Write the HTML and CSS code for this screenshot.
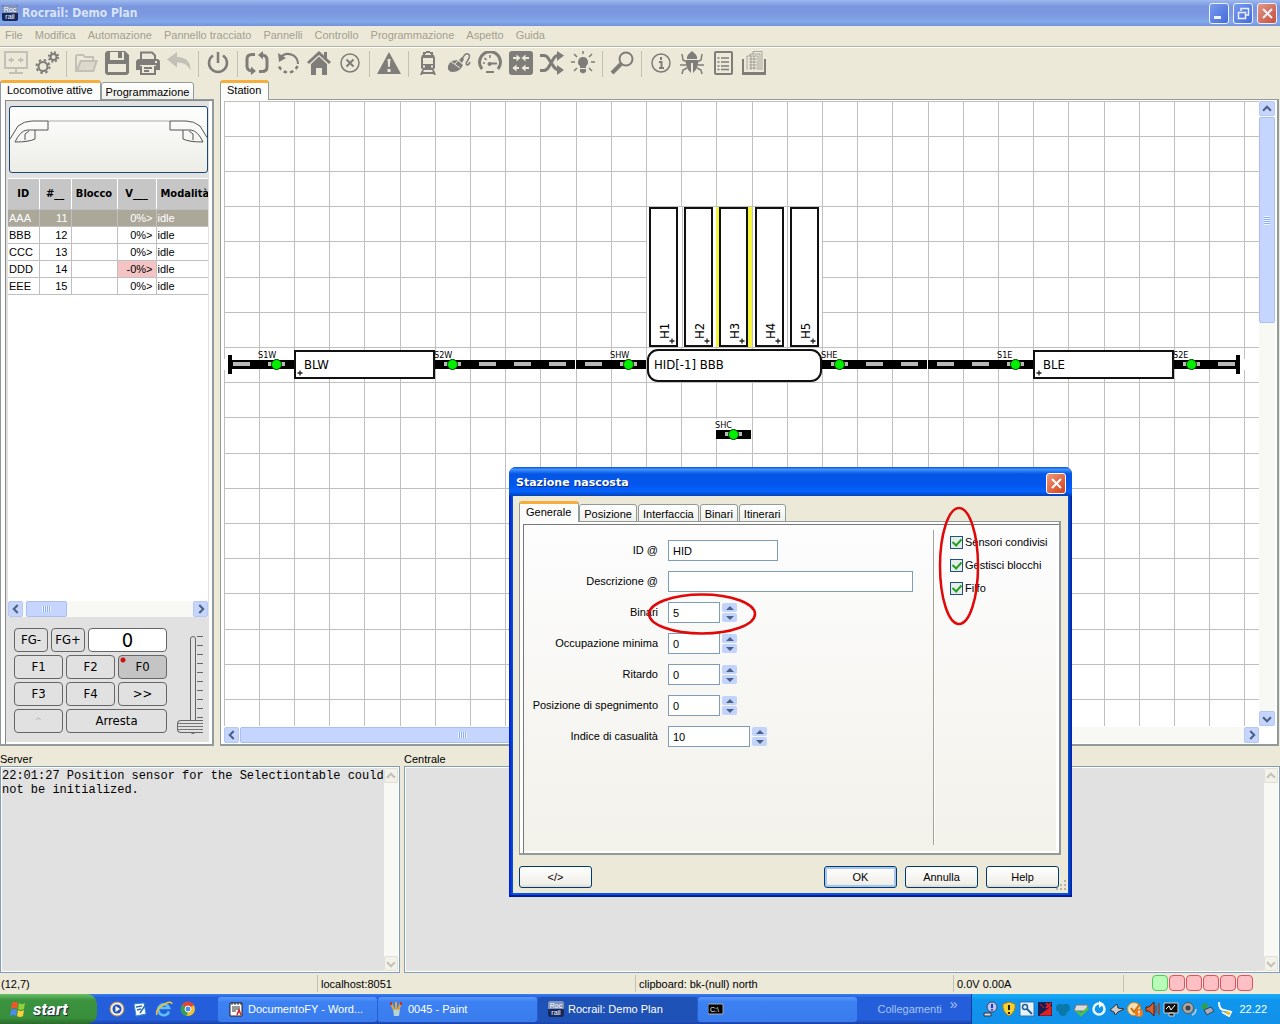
FILE: index.html
```
<!DOCTYPE html>
<html lang="it">
<head>
<meta charset="utf-8" />
<title>Rocrail: Demo Plan</title>
<link rel="stylesheet" href="styles.css">
</head>

<body>
<!-- simboli comuni -->
<svg class="defs" aria-hidden="true">
  <defs>
    <symbol id="left" viewBox="0 0 16 16"><path d="M10 3.500L5.500 8l4.500 4.500" fill="none" stroke="#4d6185" stroke-width="2.400"/></symbol>
    <symbol id="right" viewBox="0 0 16 16"><path d="M6 3.500L10.500 8 6 12.500" fill="none" stroke="#4d6185" stroke-width="2.400"/></symbol>
    <symbol id="up" viewBox="0 0 16 16"><path d="M3.500 10L8 5.500l4.500 4.500" fill="none" stroke="currentColor" stroke-width="2.400"/></symbol>
    <symbol id="down" viewBox="0 0 16 16"><path d="M3.500 6L8 10.500 12.500 6" fill="none" stroke="currentColor" stroke-width="2.400"/></symbol>
    <symbol id="logo" viewBox="0 0 16 16">
      <rect width="16" height="16" rx="2" fill="#17295c"/><path d="M0 2a2 2 0 0 1 2-2h12a2 2 0 0 1 2 2v6H0z" fill="#7f93bd"/>
      <text x="8" y="7" class="logo-t">Roc</text><text x="8" y="14" class="logo-t">rail</text>
    </symbol>
    <pattern id="grid" width="176" height="176" patternUnits="userSpaceOnUse">
      <path d="M.5 0v176M35.500 0v176M70.500 0v176M105.500 0v176M140.500 0v176M0 .5h176M0 35.500h176M0 70.500h176M0 105.500h176M0 140.500h176" stroke="#c0c0c0"/>
    </pattern>
    <g id="track"><rect y="-4" width="35" height="9" fill="#000"/><rect x="9" y="-2" width="17" height="4" fill="#b8b8b8"/></g>
    <g id="sensor"><rect y="-4" width="35" height="9" fill="#000"/><rect x="9" y="-2" width="17" height="4" fill="#b8b8b8"/><circle cx="17.500" cy=".5" r="5" fill="#00f000" stroke="#003c00"/></g>
    <path id="plus" d="M-2.500 0h5M0-2.500v5" stroke="#222" stroke-width="1.300"/>
  </defs>
</svg>

<div class="titlebar">
  <svg width="16" height="16"><use href="#logo"/></svg>
  <h1>Rocrail: Demo Plan</h1>
  <button class="win" aria-label="Riduci"><svg width="19" height="19"><path d="M4 13.500h7" stroke="#fff" stroke-width="3"/></svg></button>
  <button class="win" aria-label="Ripristina"><svg width="19" height="19"><path d="M7 7V4.500h7.500V11H12M4.500 8.500h7v6h-7z" fill="none" stroke="#fff" stroke-width="1.500"/></svg></button>
  <button class="win close" aria-label="Chiudi"><svg width="19" height="19"><path d="M5 5l9 9M14 5l-9 9" stroke="#fff" stroke-width="2"/></svg></button>
</div>

<div class="menubar">
  <a href="#">File</a><a href="#">Modifica</a><a href="#">Automazione</a><a href="#">Pannello tracciato</a><a href="#">Pannelli</a><a href="#">Controllo</a><a href="#">Programmazione</a><a href="#">Aspetto</a><a href="#">Guida</a>
</div>

<div class="toolbar">
  <button class="off" aria-label="Connetti"><svg viewBox="0 0 24 24"><path d="M1 1h22v16H1z" class="l"/><path d="M12 17v4M5 22h14" class="l"/><path d="M10 9H6M14 9h4" class="l"/><path d="M4 9l4-3v6zM20 9l-4-3v6z"/></svg></button>
  <button aria-label="Opzioni"><svg viewBox="0 0 24 24"><circle cx="8" cy="15.500" r="4.500" class="l"/><circle cx="8" cy="15.500" r="6.500" class="l" stroke-dasharray="2.500 2.600"/><circle cx="18.500" cy="6" r="3" class="l"/><circle cx="18.500" cy="6" r="4.700" class="l" stroke-dasharray="1.900 1.790"/></svg></button>
  <i></i>
  <button class="off" aria-label="Apri"><svg viewBox="0 0 24 24"><path d="M2 20V5l1-1h6l2 2h8v3" class="l"/><path d="M6 9h18l-4 12H1z"/><path d="M7.500 11h13.500l-2.500 8H4.500z" fill="#dddacd"/></svg></button>
  <button aria-label="Salva"><svg viewBox="0 0 24 24"><path fill-rule="evenodd" d="M2 0h18l4 4v18l-2 2H2l-2-2V2zM5 1v8h14V1h-2v6h-4V1zM3 13v8h18v-8z"/></svg></button>
  <button aria-label="Stampa"><svg viewBox="0 0 24 24"><path d="M5 8V1.500h11l3 3V8" class="l"/><path fill-rule="evenodd" d="M2 8h20l2 2v9h-4v-5H4v5H0v-9zM19 10h2v2h-2z"/><path d="M5 15v8h14v-8M8 17h8M8 20h5" class="l"/></svg></button>
  <button class="off" aria-label="Annulla modifica"><svg viewBox="0 0 24 24"><path d="M0 8.500L10 1v5c9 0 14 5 13.500 13.500C21 14 17 11.500 10 11.500v5z"/></svg></button>
  <i></i>
  <button aria-label="Alimentazione"><svg viewBox="0 0 24 24"><path d="M7 4.500a9 9 0 1 0 10 0M12 1v11" class="l m"/></svg></button>
  <i></i>
  <button aria-label="Auto"><svg viewBox="0 0 24 24"><path d="M10 3.500H7Q2 3.500 2 8v7q0 4 4 5M14 20.500h3q5 0 5-4.500V9q0-4-4-5" class="l b"/><path d="M6 15.500l5 4.500-5 4zM18 0l-5 4 5 4.500z"/></svg></button>
  <button aria-label="Reset"><svg viewBox="0 0 24 24"><path d="M4 7a10 10 0 0 1 18 6" class="l"/><path d="M21.500 15A10 10 0 0 1 2.500 14" class="l m" stroke-dasharray="3.500 3"/><path d="M2 2l1 9 7-4z"/></svg></button>
  <button aria-label="Home"><svg viewBox="0 0 24 24"><path d="M1 12L12 2l11 10M18.500 1v6" class="l b"/><path d="M4 13l8-7.500L20 13v11h-5v-7H9v7H4z"/></svg></button>
  <button aria-label="Stop"><svg viewBox="0 0 24 24"><circle cx="12" cy="12" r="9" class="l t"/><path d="M8.500 8.500l7 7M15.500 8.500l-7 7" class="l"/></svg></button>
  <i></i>
  <button aria-label="Emergenza"><svg viewBox="0 0 24 24"><path fill-rule="evenodd" d="M12 1l12 22H0zM10.500 8l.7 8h1.600l.7-8zM10.500 18v3h3v-3z"/></svg></button>
  <i></i>
  <button aria-label="Locomotive"><svg viewBox="0 0 24 24"><path d="M8 4V2h2M16 4V2h-2M10 1h4" class="l"/><path fill-rule="evenodd" d="M6 4h12l1 3v10l-2 2H7l-2-2V7zM7 7v6h10V7zM7 14.500v2h2v-2zM15 14.500v2h2v-2z"/><path d="M7 19l-2 5M17 19l2 5M6 22h12" class="l"/></svg></button>
  <button aria-label="Mouse"><svg viewBox="0 0 24 24"><path d="M1 15q-1 6 5 6 7 0 10-7l-6-5q-7 0-9 6z"/><path d="M12 9l3 3 2-4-2-2z"/><path d="M3 10l10 7M8 13l5-6" stroke="#ece9d8"/><path d="M15 8q3-6 6-5 3 1 0 6-3 4-1 5 2 0 3-3" class="l t"/></svg></button>
  <button aria-label="Velocità"><svg viewBox="0 0 24 24"><path d="M4 18A10.500 10.500 0 1 1 20 18" class="l b"/><path d="M11 12.500h8M8 21h8" class="l"/><circle cx="11.500" cy="13" r="2"/><path d="M12 4v3M5 12h2M6.500 7l2 2" class="l t"/></svg></button>
  <button aria-label="Scambi"><svg viewBox="0 0 24 24"><rect width="24" height="24" rx="3"/><path d="M4 7h6M14 7h6M4 17h6M14 17h6" stroke="#ece9d8" stroke-width="2"/><path d="M7.500 3.500l4 3.500-4 3.500zM16.500 3.500l-4 3.500 4 3.500zM7.500 13.500l-4 3.500 4 3.500zM16.500 13.500l-4 3.500 4 3.500z" fill="#ece9d8"/></svg></button>
  <button aria-label="Itinerari"><svg viewBox="0 0 24 24"><path d="M0 4.500h4q3 0 5 4l4 6q2 4 5 4h1M0 19.500h4q3 0 5-4l4-7q2-4 5-4h1" class="l b"/><path d="M17 0l7 4.500L17 10zM17 14l7 5-7 5z"/></svg></button>
  <button aria-label="Luci"><svg viewBox="0 0 24 24"><path d="M12 6a5 5 0 0 0-3 9v2h6v-2a5 5 0 0 0-3-9zM9 18h6v3l-3 1.500L9 21z"/><path d="M12 0v3M0 11h4M20 11h4M3 3l3 3M21 3l-3 3M3 20l3-3M21 20l-3-3" class="l t"/></svg></button>
  <i></i>
  <button aria-label="Cerca"><svg viewBox="0 0 24 24"><circle cx="16" cy="8" r="6.500" class="l"/><path d="M11 13l-9 9" class="l w"/></svg></button>
  <i></i>
  <button aria-label="Info"><svg viewBox="0 0 24 24"><circle cx="12" cy="12" r="9" class="l t"/><path d="M12 6v3M10 11h2.500v6M10 17h5" class="l"/></svg></button>
  <button aria-label="Debug"><svg viewBox="0 0 24 24"><path d="M7 6q0-2 5-6 5 4 5 6v2H7zM6 9h12q1 8-5 13V12h-2v10Q5 17 6 9z"/><path d="M7 11L3 9 2 3M17 11l4-2 1-6M6 14H0M18 14h6M7 17l-4 2-1 4M17 17l4 2 1 4" class="l t"/></svg></button>
  <button aria-label="Elenco"><svg viewBox="0 0 24 24"><rect x="4" y="1" width="17" height="22" rx="1" class="l"/><path d="M10 7h8M10 11h8M10 15h8M10 18.500h8M6.500 7h2M6.500 11h2M6.500 15h2M6.500 18.500h2" class="l t"/></svg></button>
  <button aria-label="Documenti"><svg viewBox="0 0 24 24"><path d="M1 8v14h22V8" class="l"/><path d="M0 21h24v3H0z"/><path d="M5 19V5h11v14M8 5V3h10v16M11 3V.5h9V19M7 8h8M7 11h8M7 14h8M7 17h8M9 5v14M12 5v14" class="l h"/></svg></button>
</div>

<div class="main">
  <div class="pane left">
    <div class="tabs"><button class="tab on">Locomotive attive</button><button class="tab">Programmazione</button></div>
    <div class="page loco">
      <button class="picture" aria-label="Locomotiva">
        <svg width="198" height="64" fill="none" stroke="#555"><path d="M38 13h122" stroke="#aaa"/><path d="M0 31L8 18Q14 13 22 13h16v9H17Q10 23 5 34q14 0 20-3v-9M15 32v-6l4-3M198 31l-8-13q-6-5-14-5h-16v9h21q7 1 12 12-14 0-20-3v-9M183 32v-6l-4-3"/></svg>
      </button>
      <div class="list">
        <table>
          <thead><tr><th>ID</th><th>#__</th><th>Blocco</th><th>V___</th><th>Modalità</th></tr></thead>
          <tbody>
            <tr class="sel"><td>AAA</td><td>11</td><td></td><td>0%&gt;</td><td>idle</td></tr>
            <tr><td>BBB</td><td>12</td><td></td><td>0%&gt;</td><td>idle</td></tr>
            <tr><td>CCC</td><td>13</td><td></td><td>0%&gt;</td><td>idle</td></tr>
            <tr><td>DDD</td><td>14</td><td></td><td class="rev">-0%&gt;</td><td>idle</td></tr>
            <tr><td>EEE</td><td>15</td><td></td><td>0%&gt;</td><td>idle</td></tr>
          </tbody>
        </table>
      </div>
      <div class="hscroll">
        <button class="arrow" aria-label="Sinistra"><svg width="14" height="14"><use href="#left"/></svg></button>
        <span class="thumb short"></span>
        <button class="arrow end" aria-label="Destra"><svg width="14" height="14"><use href="#right"/></svg></button>
      </div>
      <div class="throttle">
        <div class="keys">
          <div class="row"><button class="fg">FG-</button><button class="fg">FG+</button><output>0</output></div>
          <div class="row"><button>F1</button><button>F2</button><button class="f0">F0</button></div>
          <div class="row"><button>F3</button><button>F4</button><button>&gt;&gt;</button></div>
          <div class="row"><button disabled>^</button><button class="wide">Arresta</button></div>
        </div>
        <input class="speed" type="range" min="0" max="100" value="0" aria-label="Velocità" />
      </div>
    </div>
  </div>

  <div class="pane right">
    <div class="tabs"><button class="tab on">Station</button></div>
    <div class="page plan">
      <svg class="canvas">
        <rect width="100%" height="100%" fill="url(#grid)"/>
        <!-- binari -->
        <g transform="translate(0 263)">
          <use href="#track"/><use href="#track" x="246"/><use href="#track" x="281"/><use href="#track" x="316"/><use href="#track" x="352"/>
          <use href="#track" x="633"/><use href="#track" x="668"/><use href="#track" x="704"/><use href="#track" x="739"/><use href="#track" x="985"/>
          <use href="#sensor" x="35"/><use href="#sensor" x="211"/><use href="#sensor" x="387"/><use href="#sensor" x="598"/><use href="#sensor" x="774"/><use href="#sensor" x="950"/>
          <path d="M0-5h5V6H0zM1015-5h6V6h-6z" fill="#fff"/>
          <path d="M4-9h4V10H4zM1012-9h4V10h-4z"/>
        </g>
        <g class="small">
          <text x="34" y="257">S1W</text><text x="210" y="257">S2W</text><text x="386" y="257">SHW</text>
          <text x="597" y="257">SHE</text><text x="773" y="257">S1E</text><text x="949" y="257">S2E</text>
        </g>
        <!-- blocchi -->
        <g class="block">
          <rect x="71" y="250" width="139" height="27"/><rect x="810" y="250" width="139" height="27"/>
        </g>
        <use href="#plus" x="76" y="272"/><use href="#plus" x="815" y="272"/>
        <text x="80" y="268">BLW</text><text x="819" y="268">BLE</text>
        <!-- stazione nascosta -->
        <path d="M423 106h175v140H423z" fill="#fff"/>
        <path d="M458.500 106v140M493.500 106v140M528.500 106v140M563.500 106v140M598.500 106v140" stroke="#c0c0c0"/>
        <path d="M492 106h36v140h-36z" fill="#f5f53c"/>
        <g class="block">
          <rect x="426" y="107" width="27" height="138"/><rect x="461" y="107" width="27" height="138"/><rect x="496" y="107" width="27" height="138"/><rect x="532" y="107" width="27" height="138"/><rect x="567" y="107" width="27" height="138"/>
          <rect x="424" y="249" width="173" height="31" rx="10"/>
        </g>
        <use href="#plus" x="448" y="240"/><use href="#plus" x="483" y="240"/><use href="#plus" x="518" y="240"/><use href="#plus" x="554" y="240"/><use href="#plus" x="589" y="240"/>
        <text transform="translate(445 238) rotate(-90)">H1</text><text transform="translate(480 238) rotate(-90)">H2</text><text transform="translate(515 238) rotate(-90)">H3</text><text transform="translate(551 238) rotate(-90)">H4</text><text transform="translate(586 238) rotate(-90)">H5</text>
        <text x="430" y="268">HID[-1] BBB</text>
        <path d="M492 318h34v11h-34z" fill="#fff"/>
        <use href="#sensor" x="492" y="333"/>
        <text class="small" x="491" y="327">SHC</text>
      </svg>
      <div class="vscroll">
        <button class="arrow" aria-label="Su"><svg width="14" height="14"><use href="#up"/></svg></button>
        <span class="thumb tall"></span>
        <button class="arrow end" aria-label="Giù"><svg width="14" height="14"><use href="#down"/></svg></button>
      </div>
      <div class="hscroll">
        <button class="arrow" aria-label="Sinistra"><svg width="14" height="14"><use href="#left"/></svg></button>
        <span class="thumb long"></span>
        <button class="arrow end" aria-label="Destra"><svg width="14" height="14"><use href="#right"/></svg></button>
      </div>
    </div>
  </div>
</div>

<div class="logs">
  <div class="log">
    <label for="server">Server</label>
    <div class="logbox">
      <textarea id="server" readonly>22:01:27 Position sensor for the Selectiontable could
not be initialized.</textarea>
      <div class="vscroll dim"><span class="arrow"><svg width="14" height="14"><use href="#up"/></svg></span><span class="arrow end"><svg width="14" height="14"><use href="#down"/></svg></span></div>
    </div>
  </div>
  <div class="log">
    <label for="centrale">Centrale</label>
    <div class="logbox">
      <textarea id="centrale" readonly></textarea>
      <div class="vscroll dim"><span class="arrow"><svg width="14" height="14"><use href="#up"/></svg></span><span class="arrow end"><svg width="14" height="14"><use href="#down"/></svg></span></div>
    </div>
  </div>
</div>

<div class="status">
  <span>(12,7)</span><span>localhost:8051</span><span>clipboard: bk-(null) north</span><span>0.0V 0.00A</span>
  <span class="leds"><b class="ok"></b><b></b><b></b><b></b><b></b><b></b></span>
</div>

<div class="taskbar">
  <button class="start">
    <svg width="18" height="18"><path d="M3 3q3-2 6 0L8 9q-3-2-6 0z" fill="#f0562a"/><path d="M10 3q3 2 6 0l-1 6q-3 2-6 0z" fill="#8cd03a"/><path d="M2 10q3-2 6 0l-1 6q-3-2-6 0z" fill="#4a8cf0"/><path d="M9 10q3 2 6 0l-1 6q-3 2-6 0z" fill="#fbd038"/></svg>
    start
  </button>
  <div class="quick">
    <a href="#" aria-label="Media"><svg width="16" height="16"><circle cx="8" cy="8" r="7" fill="#e8eef8" stroke="#d08a20"/><circle cx="8" cy="8" r="4.500" fill="#2454b4"/><path d="M6.500 5l4.500 3-4.500 3z" fill="#fff"/></svg></a>
    <a href="#" aria-label="Desktop"><svg width="16" height="16"><path d="M2 3l10-1 2 11-10 2z" fill="#fff" stroke="#3c8cd0"/><path d="M4 6l6-1M5 9l4-1M8 12l6-9" stroke="#2a6cb8" stroke-width="1.500"/></svg></a>
    <a href="#" aria-label="Explorer"><svg width="18" height="16"><path d="M14 10.500A5.500 5.500 0 1 1 14 7H5" fill="none" stroke="#5cc0f8" stroke-width="2.600"/><path d="M2 14Q0 9 8 4t9-1" fill="none" stroke="#f4c430" stroke-width="1.500"/></svg></a>
    <a href="#" aria-label="Chrome"><svg width="16" height="16"><circle cx="8" cy="8" r="7" fill="#f0c030"/><path d="M8 8L2 4a7 7 0 0 1 12 0z" fill="#e04434"/><path d="M8 8l-6-4a7 7 0 0 0 5 11z" fill="#34a050"/><circle cx="8" cy="8" r="3" fill="#4a8cf0" stroke="#fff"/></svg></a>
  </div>
  <div class="tasks">
    <button><svg width="16" height="16"><path d="M2 2h12v13H2z" fill="#fff" stroke="#222"/><path d="M4 1v3M7 1v3M10 1v3M13 1v3M4 6h8M4 8h8M4 10h4" stroke="#333"/><path d="M9 14l2-5 2 5" fill="none" stroke="#d02020" stroke-width="1.500"/></svg>DocumentoFY - Word...</button>
    <button><svg width="16" height="16"><path d="M5 8h7l-1 7H6z" fill="#b8d4d8"/><path d="M6 9L3 2M8 9V1M10 9l3-7" stroke="#e0a840" stroke-width="2"/><path d="M3 4V1M13 4V1" stroke="#d03020" stroke-width="2"/></svg>0045 - Paint</button>
    <button class="on"><svg width="16" height="16"><use href="#logo"/></svg>Rocrail: Demo Plan</button>
    <button aria-label="Prompt"><svg width="16" height="16"><path d="M0 3h15v10H0z" fill="#000" stroke="#aaa"/><text x="2" y="11" class="cmd">C:\</text></svg></button>
  </div>
  <div class="links">Collegamenti <sup>»</sup></div>
  <div class="tray">
    <svg width="16" height="16"><circle cx="9" cy="6" r="5" fill="#b8c8ff" stroke="#445"/><path d="M9 3v4M9 8v1.500" stroke="#2038c0" stroke-width="2"/><path d="M1 12h7v3H1z" fill="#ddd" stroke="#334"/></svg>
    <svg width="16" height="16"><path d="M8 1l6 2q1 8-6 12Q1 11 2 3z" fill="#f8d030" stroke="#a08020"/><path d="M8 4v5M8 11v2" stroke="#222" stroke-width="2"/></svg>
    <svg width="16" height="16"><path d="M1 1h14v14H1z" fill="#e8f4fc" stroke="#3070b0"/><circle cx="6" cy="6" r="2.500" fill="none" stroke="#206090" stroke-width="1.500"/><path d="M8 8l5 5" stroke="#206090" stroke-width="2"/></svg>
    <svg width="16" height="16"><path d="M1 1h14v14H1z" fill="#181c50"/><path d="M3 3l4 4M3 14L14 6v8z" fill="#e02020" stroke="#e02020"/><path d="M9 2l5 5M14 2L9 7" stroke="#e02020" stroke-width="2"/></svg>
    <svg width="16" height="16"><circle cx="5" cy="7" r="4" fill="#0a78a8"/><circle cx="11" cy="7" r="4" fill="#0a78a8"/><circle cx="8" cy="11" r="4" fill="#0a78a8"/></svg>
    <svg width="16" height="16"><path d="M3 4h12l-2 6H1z" fill="#ddd" stroke="#777"/><path d="M4 10l4 4 7-7" fill="none" stroke="#50c040" stroke-width="2.500"/></svg>
    <svg width="16" height="16"><circle cx="8" cy="8" r="5.500" fill="none" stroke="#e8f6ff" stroke-width="2.500"/><path d="M8 0l5 3-5 4z" fill="#fff"/></svg>
    <svg width="16" height="16"><path d="M1 9l7-6 1 4 6 1-6 3-3 3-1-3z" fill="#ccc" stroke="#333"/></svg>
    <svg width="16" height="16"><circle cx="7" cy="8" r="6.500" fill="#f4e0b0" stroke="#d08a20"/><path d="M4 7l3 4 6-8" fill="none" stroke="#c87010" stroke-width="2"/><circle cx="12" cy="12" r="4" fill="#f07818"/><path d="M12 9.500v3M12 13.500v1" stroke="#fff" stroke-width="1.500"/></svg>
    <svg width="16" height="16"><path d="M1 6h3l5-5v14l-5-5H1z" fill="#d86030" stroke="#501808"/><path d="M11 4v8M14 2v12" stroke="#a04020" stroke-width="1.500"/></svg>
    <svg width="16" height="16"><path d="M1 2h14v10H1zM6 12h5v3H6z" fill="#111" stroke="#ccc"/><path d="M3 8l3-3 2 4 4-5" fill="none" stroke="#fff"/></svg>
    <svg width="16" height="16"><circle cx="7" cy="7" r="5.500" fill="#aaa" stroke="#555"/><circle cx="7" cy="7" r="2.500" fill="#444"/><path d="M11 14q4-2 4-6" fill="none" stroke="#ccc" stroke-width="1.500"/></svg>
    <svg width="16" height="16"><path d="M2 5l5-4 2 5-5 3z" fill="#30a040"/><path d="M5 9l7-3 3 4-7 4z" fill="#aab" stroke="#345"/></svg>
    <svg width="16" height="16"><path d="M2 1q0 8 5 8l7 2-2 4-7-4" fill="none" stroke="#fff" stroke-width="2"/><path d="M9 11l4 2" stroke="#e8c020" stroke-width="3"/></svg>
    <time>22.22</time>
  </div>
</div>

<!-- finestra proprietà -->
<div class="dialog" role="dialog" aria-labelledby="dlg">
  <div class="dlg-title"><h2 id="dlg">Stazione nascosta</h2><button class="win close" aria-label="Chiudi"><svg width="19" height="19"><path d="M5 5l9 9M14 5l-9 9" stroke="#fff" stroke-width="2"/></svg></button></div>
  <div class="dlg-body">
    <div class="tabs"><button class="tab on">Generale</button><button class="tab">Posizione</button><button class="tab">Interfaccia</button><button class="tab">Binari</button><button class="tab">Itinerari</button></div>
    <div class="page form">
      <div class="fields">
        <label for="id">ID @</label><div><input type="text" id="id" class="w-id" value="HID" /></div>
        <label for="desc">Descrizione @</label><div><input type="text" id="desc" class="w-desc" value="" /></div>
        <label for="binari">Binari</label><div><input type="text" id="binari" value="5" /><span class="spin"><button aria-label="Aumenta"></button><button class="dn" aria-label="Diminuisci"></button></span></div>
        <label for="occ">Occupazione minima</label><div><input type="text" id="occ" value="0" /><span class="spin"><button aria-label="Aumenta"></button><button class="dn" aria-label="Diminuisci"></button></span></div>
        <label for="rit">Ritardo</label><div><input type="text" id="rit" value="0" /><span class="spin"><button aria-label="Aumenta"></button><button class="dn" aria-label="Diminuisci"></button></span></div>
        <label for="pos">Posizione di spegnimento</label><div><input type="text" id="pos" value="0" /><span class="spin"><button aria-label="Aumenta"></button><button class="dn" aria-label="Diminuisci"></button></span></div>
        <label for="cas">Indice di casualità</label><div><input type="text" id="cas" class="w-cas" value="10" /><span class="spin"><button aria-label="Aumenta"></button><button class="dn" aria-label="Diminuisci"></button></span></div>
      </div>
      <div class="checks">
        <label><input type="checkbox" checked />Sensori condivisi</label>
        <label><input type="checkbox" checked />Gestisci blocchi</label>
        <label><input type="checkbox" checked />Filfo</label>
      </div>
    </div>
    <div class="buttons"><button>&lt;/&gt;</button><button class="ok">OK</button><button>Annulla</button><button>Help</button></div>
  </div>
  <svg class="grip" width="12" height="12"><path d="M9 1h2M5 5h2M9 5h2M1 9h2M5 9h2M9 9h2" stroke="#b8b4a0" stroke-width="2"/></svg>
  <!-- segni rossi -->
  <svg class="marks" fill="none" stroke="#e00808" stroke-width="2.500"><ellipse cx="193" cy="147" rx="53" ry="19.500"/><ellipse cx="450" cy="99" rx="19" ry="58"/></svg>
</div>
</body>
</html>
```
FILE: styles.css
```
/* base */
*{box-sizing:border-box;}
body,h1,h2{margin:0; padding:0;}
body{display:flex; flex-direction:column; height:100vh; position:relative; overflow:hidden; background:#ece9d8; color:#000; font-family:Tahoma,"Liberation Sans",sans-serif; font-size:11px; line-height:14px;}
button,input,textarea{font:inherit; color:inherit; margin:0; padding:0; border:0; border-radius:0; background:none;}
svg{display:block; flex:none;}
a{color:inherit; text-decoration:none;}
.defs{position:absolute; width:0; height:0;}
.logo-t{font-size:7px; fill:#fff; text-anchor:middle;}

/* barra del titolo */
.titlebar{display:flex; align-items:center; gap:4px; height:26px; padding:0 3px 0 2px; background:linear-gradient(#9db9ee 0,#7a96df 25%,#7c98e0 55%,#82a9e9 85%,#7590d8);}
.titlebar h1{flex:1; font:bold 12px/16px "DejaVu Sans Condensed","DejaVu Sans",sans-serif; color:#d8e4f8;}
.win{display:flex; align-items:center; justify-content:center; width:20px; height:21px; border:1px solid #fff; border-radius:3px; background:linear-gradient(135deg,#7a9cf0,#3a62d8);}
.titlebar .win{opacity:.85;}
.titlebar .close,.dialog .close{background:linear-gradient(135deg,#f0977a,#d4401c);}

/* menu */
.menubar{display:flex; gap:12px; height:21px; padding:2px 5px; color:#a3a08f; border-bottom:1px solid #b5b2a2;}

/* toolbar */
.toolbar{display:flex; align-items:center; height:33px; border-top:1px solid #fff;}
.toolbar button{display:flex; justify-content:center; width:31px; height:26px; color:#7e7d79;}
.toolbar .off{color:#c3c1b7;}
.toolbar i{width:8px; height:26px; background:linear-gradient(90deg,transparent 4px,#c5c2b2 4px 5px,transparent 5px);}
.toolbar svg{width:24px; height:24px; fill:currentColor;}
.toolbar .l{fill:none; stroke:currentColor; stroke-width:2;}
.toolbar .m{stroke-width:2.500;}
.toolbar .b{stroke-width:3;}
.toolbar .w{stroke-width:4;}
.toolbar .t{stroke-width:1.500;}
.toolbar .h{stroke-width:.6;}

/* schede */
.tabs{display:flex; align-items:flex-end; height:20px; position:relative; z-index:1; margin-bottom:-1px;}
.tab{height:18px; padding:1px 4px 0; border:1px solid #919b9c; border-radius:3px 3px 0 0; background:linear-gradient(#fff,#f0f0ea);}
.tab.on{height:20px; padding:0 7px 3px 6px; border-top:3px solid #f5ae3c; border-bottom:0; background:#fcfcfb;}
.page{flex:1; min-height:0; border:1px solid #919b9c; border-right-width:2px; border-bottom-width:2px; background:#fff;}

.main{flex:1; min-height:0; display:grid; grid-template-columns:214px 1fr; gap:6px; padding-right:1px;}
.pane{display:flex; flex-direction:column; min-width:0; min-height:0;}

/* locomotive */
.loco{display:flex; flex-direction:column; padding:3px 4px 2px 7px; background:#e1e1e1; box-shadow:inset 4px 0 #fff,inset 5px 1px #888,inset -3px 0 #fff,inset 0 -2px #fff;}
.picture{height:67px; margin:3px 0 5px 1px; width:199px; border:1px solid #1c4872; border-radius:3px; background:linear-gradient(#fefefe,#ededE8);}
.list{flex:1; min-height:0; overflow:hidden; background:#fff;}
table{width:216px; table-layout:fixed; border-collapse:collapse;}
th{height:31px; padding:0; background:#c6c6c6; border-right:1px solid #fff; border-bottom:1px solid #c0c0c0; border-top:1px solid #fff; font-family:"DejaVu Sans Condensed","DejaVu Sans",sans-serif; font-weight:bold;}
th:nth-child(1){width:31px;} th:nth-child(2){width:32px;} th:nth-child(3){width:46px;} th:nth-child(4){width:39px;}
th:nth-child(5){text-align:left; padding-left:4px;}
td{height:17px; padding:0 1px; border-right:1px solid #c0c0c0; border-bottom:1px solid #c0c0c0;}
td:nth-child(2),td:nth-child(4){text-align:right; padding-right:3px;}
.sel td{background:#aca899; color:#fff;}
.rev{background:#f4c4c4;}

/* barre di scorrimento */
.hscroll,.vscroll{display:flex; gap:1px; background:#f8f8f4;}
.hscroll{height:16px;}
.vscroll{flex-direction:column; width:16px;}
.arrow{display:flex; align-items:center; justify-content:center; width:15px; height:16px; flex:none; border:1px solid #b4c8f0; border-radius:2px; background:#c6d5fd; color:#4d6185;}
.vscroll .arrow{width:100%; height:15px;}
.hscroll .end{margin-left:auto;}
.vscroll .end{margin-top:auto;}
.thumb{display:flex; align-items:center; justify-content:center; border:1px solid #a8bff0; border-radius:2px; background:#c6d5fd;}
.thumb:before{content:""; width:9px; height:6px; background:repeating-linear-gradient(90deg,#eef4fe 0 1px,#8cb0f8 1px 2px);}
.tall:before{width:6px; height:9px; background:repeating-linear-gradient(#eef4fe 0 1px,#8cb0f8 1px 2px);}
.short{width:41px; margin-left:2px;}
.long{width:43%;}
.tall{height:206px;}
.dim{width:14px;}
.dim .arrow{background:#f2f1ea; border-color:#e2e0d4; color:#c4c2b6;}

/* regolatore */
.throttle{display:flex; justify-content:space-between; padding:11px 5px 8px 6px; font-family:"DejaVu Sans Condensed","DejaVu Sans",sans-serif;}
.keys{display:flex; flex-direction:column; gap:3px; width:153px;}
.row{display:flex; gap:3px;}
.row button,.row output{flex:1; height:24px; border:1px solid #666; border-radius:4px; font-size:13px; line-height:22px; text-align:center;}
.row .fg{flex:none; width:34px;}
.row output{background:#fff; font-size:20px;}
.row .wide{flex:none; width:101px;}
.row button:disabled{color:#b4b4b4; font-size:9px;}
.row .f0{background:radial-gradient(circle at 4px 4px,#d01010 2px,#c4c4c4 3px);}
.speed{-webkit-appearance:none; appearance:none; writing-mode:vertical-lr; direction:rtl; width:26px; height:98px; margin-top:8px; background:repeating-linear-gradient(#666 0 1px,transparent 1px 9px) right top/6px 86px no-repeat;}
.speed::-webkit-slider-runnable-track{width:6px; height:98px; margin-left:6px; border:1px solid #666; border-radius:3px; background:#e1e1e1;}
.speed::-webkit-slider-thumb{-webkit-appearance:none; width:26px; height:13px; margin-left:-14px; border:1px solid #666; border-right:0; border-radius:4px 0 0 4px; background:repeating-linear-gradient(#e1e1e1 0 2px,#777 2px 3px);}

/* piano */
.plan{display:grid; grid-template:1fr 17px / 1fr 16px; padding:1px 2px 1px 3px;}
.canvas{width:100%; height:100%; font:13px "DejaVu Sans Condensed","DejaVu Sans",sans-serif;}
.plan .hscroll{margin-top:1px;}
.small{font-size:9px;}
.block rect{fill:#fff; stroke:#111; stroke-width:2;}

/* log */
.logs{display:grid; grid-template-columns:400px 1fr; gap:4px; height:227px; padding-top:6px;}
.log{display:flex; flex-direction:column; min-width:0;}
.log label{height:14px; line-height:15px;}
.logbox{flex:1; display:flex; border:1px solid #7f9db9; background:#fff; padding:1px; min-height:0;}
.logbox textarea{flex:1; min-width:0; resize:none; outline:0; overflow:hidden; white-space:pre; background:#e1e1e1; font:12px/14px "Liberation Mono",monospace; padding:1px 0 0;}

/* stato */
.status{display:grid; grid-template-columns:317px 318px 318px 170px 1fr; align-items:center; height:21px;}
.status span{height:17px; line-height:19px; padding-left:3px; border-left:1px solid #c5c2b2;}
.status span:first-child{border:0; padding-left:1px;}
.status .leds{display:flex; gap:1px; padding-left:28px;}
.leds b{width:16px; height:16px; border:1px solid #e05060; border-radius:4px; background:#fcc0c4;}
.leds .ok{border-color:#50c860; background:#b8fcb8;}

/* barra delle applicazioni */
.taskbar{display:flex; align-items:stretch; height:30px; color:#fff; background:linear-gradient(#3a80f0 0,#245edb 12%,#245edb 85%,#1941a5);}
.start{display:flex; align-items:center; gap:6px; width:97px; padding-left:9px; border-radius:0 10px 10px 0; background:linear-gradient(#6cc068 0,#3c9440 20%,#388e3a 80%,#2a6a2c); font:italic bold 17px/20px Roboto,sans-serif; text-shadow:1px 1px 1px #224; color:#fff;}
.quick{display:flex; align-items:center; gap:7px; width:121px; padding-left:12px;}
.tasks{display:flex; gap:1px; align-items:center;}
.tasks button{display:flex; align-items:center; gap:4px; width:159px; height:25px; padding-left:10px; border-radius:3px; background:linear-gradient(#5a98fa,#3c81f3 20%,#3a7cec); text-align:left;}
.tasks .on{background:#1e52b7;}
.cmd{font-size:7px; fill:#fff;}
.links{flex:1; display:flex; align-items:center; justify-content:flex-end; gap:8px; padding-right:14px; color:#a8c4f4;}
.links sup{padding-bottom:10px; font-size:14px;}
.tray{display:flex; align-items:center; gap:2px; padding:0 13px 0 11px; border-left:1px solid #0c3c9c; background:linear-gradient(#18b0f8,#0f96ee 20%,#1290e8);}
.tray time{margin-left:4px;}

/* dialogo */
.dialog{position:absolute; left:509px; top:467px; width:563px; height:430px; display:flex; flex-direction:column; padding:0 4px 4px; border-radius:7px 7px 0 0; background:linear-gradient(90deg,#0019cf,#0855dd 4px,#0855dd 559px,#001ea0); box-shadow:inset 0 -2px #0019a0;}
.dlg-title{display:flex; align-items:center; justify-content:space-between; height:29px; margin:0 -4px; padding:3px 6px 0 7px; border-radius:7px 7px 0 0; background:linear-gradient(#0a50d8 0,#3f94fe 8%,#0456e4 24%,#0256ee 60%,#0462fc 84%,#0340b8);}
.dlg-title h2{font:bold 11px/14px "DejaVu Sans",sans-serif; color:#fff; text-shadow:1px 1px #0a2a80;}
.dlg-body{flex:1; display:flex; flex-direction:column; min-height:0; padding:5px 7px 5px 6px; background:#ece9d8;}
.dialog .tabs{gap:1px; height:21px;}
.dialog .tab.on{height:21px; margin-right:-1px;}
.form{display:flex; padding:8px 3px 8px 4px; background:linear-gradient(#fdfdfe,#f2f1ea); box-shadow:inset 3px 2px #fff,inset 4px 3px #777,inset -3px -2px #fff;}
.fields{flex:1; display:grid; grid-template-columns:134px 1fr; gap:10px; align-content:start; padding-top:10px;}
.fields label{text-align:right; line-height:21px;}
.fields div{display:flex; gap:2px; height:21px;}
.fields input{width:52px; border:1px solid #7f9db9; padding:0 4px; background:#fff;}
.fields .w-id{width:110px;}
.fields .w-desc{width:245px;}
.fields .w-cas{width:82px;}
.spin{display:flex; flex-direction:column; gap:1px; padding-top:1px;}
.spin button{display:flex; align-items:center; justify-content:center; width:15px; height:9px; border-radius:2px; background:#c2d3fc;}
.spin button:before{content:""; border:4px solid transparent; border-top:0; border-bottom:4px solid #4d6185;}
.spin .dn:before{border-bottom:0; border-top:4px solid #4d6185;}
.checks{width:123px; display:flex; flex-direction:column; gap:9px; padding:5px 0 0 16px; border-left:1px solid #a5a294; box-shadow:inset 1px 0 #fff;}
.checks label{display:flex; align-items:center; gap:2px; white-space:nowrap;}
.checks input{-webkit-appearance:none; appearance:none; flex:none; display:flex; justify-content:center; width:13px; height:13px; border:1px solid #1c5180; background:#e8ece8;}
.checks input:checked:before{content:""; width:4px; height:7px; border:solid #21a121; border-width:0 2px 2px 0; transform:rotate(42deg);}
.buttons{display:flex; gap:8px; padding:11px 2px 0 0;}
.buttons button{width:73px; height:22px; border:1px solid #003c74; border-radius:3px; background:linear-gradient(#fff,#f0efe8 85%,#dcd8cc);}
.buttons .ok{margin-left:auto; box-shadow:inset 0 0 0 2px #a8c4f0;}
.grip{position:absolute; right:5px; bottom:5px;}
.marks{position:absolute; left:0; top:0; width:100%; height:100%; pointer-events:none;}
```
